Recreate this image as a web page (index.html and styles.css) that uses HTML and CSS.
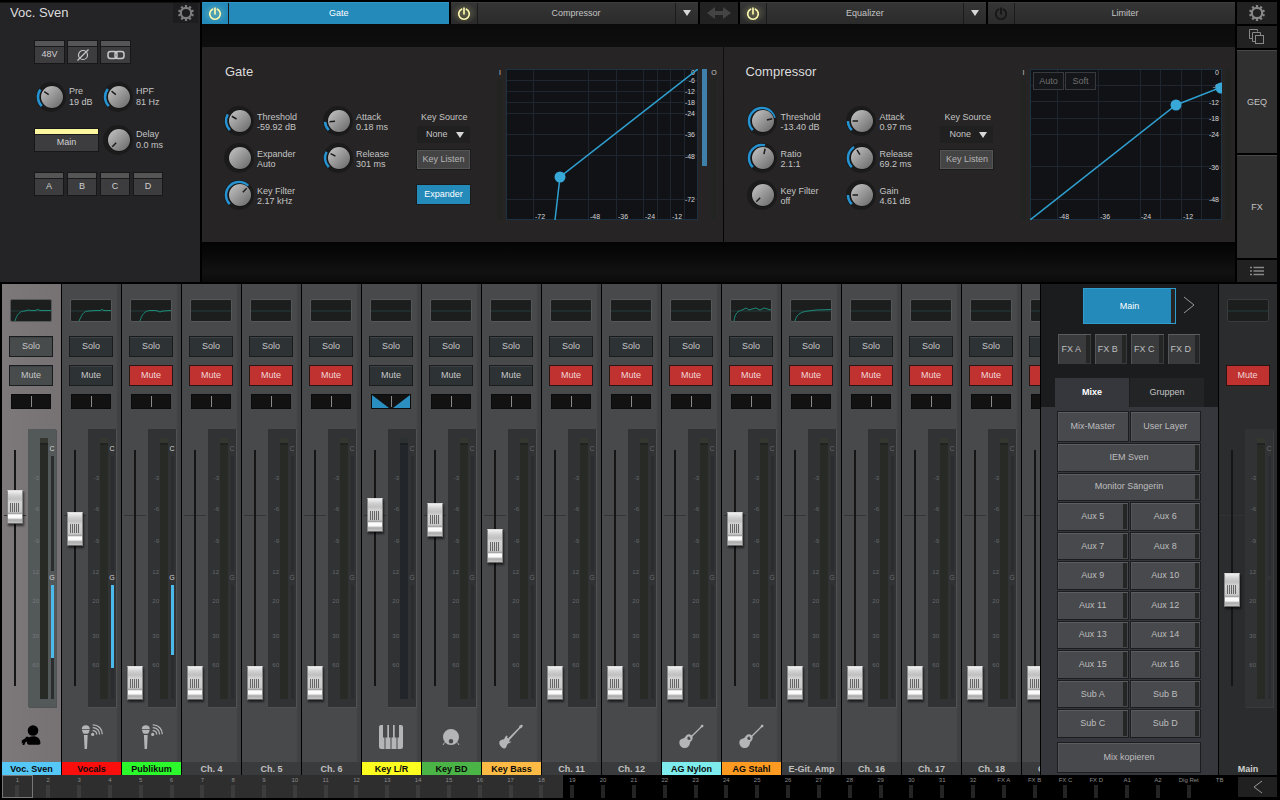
FILE: index.html
```html
<!DOCTYPE html>
<html lang="de">
<head>
<meta charset="UTF-8">
<meta name="viewport" content="width=device-width, initial-scale=1.0">
<title>Mixer</title>
<link rel="stylesheet" href="styles.css">
</head>
<body>
<svg class="defs" aria-hidden="true">
    <symbol id="i-gear" viewBox="0 0 18 18">
        <circle cx="9" cy="9" r="5.2" fill="none" stroke="currentColor" stroke-width="2.2"/>
        <circle cx="9" cy="9" r="7" fill="none" stroke="currentColor" stroke-width="2" pathLength="20" stroke-dasharray="1 1" transform="rotate(-99 9 9)"/>
    </symbol>
    <symbol id="i-power" viewBox="0 0 14 14">
        <path d="M4.6 2.2a5.3 5.3 0 1 0 4.8 0M7 1.2v5.6" fill="none" stroke="currentColor" stroke-width="1.7" stroke-linecap="round"/>
    </symbol>
    <symbol id="i-singer" viewBox="0 0 28 28">
        <circle cx="16" cy="9.500" r="5.3"/>
        <path d="M10.5 18c1.500-2 3.500-2.700 5.600-2.700 4.500 0 7.200 2.700 7.300 6.700 0 1-.7 1.700-1.700 1.700H12c-1.300 0-2-.8-2-2.200z"/>
        <path d="M4.800 19.500l3.500-2.200a2.200 2.200 0 1 1 2.500 2.700l-2.500 1.500-1 2.500H5.500l.8-2.500-1.500 1.500z"/>
    </symbol>
    <symbol id="i-mic" viewBox="0 0 28 28">
        <path d="M4.800 8c0-2.300 1.400-3.700 4-3.700s4 1.400 4 3.700zM4.800 8.800h8l-1 2.700a2 2 0 0 1-1.600 1.300H7.400a2 2 0 0 1-1.600-1.300zM6.900 14h3.800l-.7 14H7.600z"/>
        <circle cx="15.700" cy="13.400" r="1.600"/>
        <path d="M15.700 9.600c2.300 0 4 1.500 4 4M15.700 6.600c4 0 6.900 2.900 6.900 7M15.700 3.800c5.600 0 9.600 4 9.600 9.500" fill="none" stroke="currentColor" stroke-width="1.300"/>
    </symbol>
    <symbol id="i-keys" viewBox="0 0 28 28">
        <path d="M2 6a2 2 0 0 1 2-2h2v12.500h1.500V28H4.300A2.300 2.300 0 0 1 2 25.700zM8.500 28V16.500h1.800V4h1.700v12.500h1.500V28zM14.500 28V16.500H16V4h1.700v12.500h1.800V28zM20.500 28V16.500H22V4h2a2 2 0 0 1 2 2v19.700a2.300 2.300 0 0 1-2.300 2.300z"/>
    </symbol>
    <symbol id="i-drum" viewBox="0 0 28 28">
        <path fill-rule="evenodd" d="M14 8a8 8 0 1 1 0 16 8 8 0 0 1 0-16zM14 18a2.300 2.300 0 1 0 0 4.600 2.300 2.300 0 0 0 0-4.600z"/>
        <path d="M7.500 21.500l-1.500 2.500M20.500 21.500l1.500 2.500" stroke="currentColor" stroke-width="1"/>
    </symbol>
    <symbol id="i-bass" viewBox="0 0 28 28">
        <path d="M11 17.500L22 6.500l.3-1.500 2.200-1.500 1.500 1.300-1.500 2.200-1.500.5L12.500 19z"/>
        <path d="M10.500 15l-1-.500c-1.300.8-1.500 2-2 3-.6 1-1.500 1-2.700 1.300-1.800.6-2.800 2-2.500 3.700.3 1.800 1.500 3 3 4.200 1.400 1.200 3.200.8 4-.8.6-1.400.5-2.300 1.700-3.200 1.200-.8 2.900-.700 3.500-2.200l-1.500.2-1-.2.8-1.500-2.600-2.500z"/>
    </symbol>
    <symbol id="i-acoustic" viewBox="0 0 28 28">
        <path d="M12.500 16.500L23.500 5.700l.4-1.500 1.500-.7 1.200 1.200-.7 1.500-1.400.4L13.500 17.500z"/>
        <path fill-rule="evenodd" d="M9.500 14.300c1.500-1.600 3.700-1.300 5 0s1.700 3.400.4 4.900c-1.400 1.500-1.700 1.700-2 3.400-.6 3.300-3.300 5.200-6.400 4.300C4 26.200 2.300 23.900 2.300 21.400c0-2.200 1.500-3.500 3.700-3.900 1.800-.3 2.200-1.700 3.500-3.200zM12 15.600a1.700 1.700 0 1 0 0 3.400 1.700 1.700 0 0 0 0-3.400z"/>
    </symbol>
</svg>

<div class="top">
    <section class="input-panel">
        <header>
            <h1>Voc. Sven</h1>
            <button class="gear" aria-label="Channel settings"><svg><use href="#i-gear"/></svg></button>
        </header>
        <div class="input-body">
            <div class="row row-3">
                <button class="led-btn">48V</button>
                <button class="led-btn" aria-label="Phase"><svg viewBox="0 0 14 12"><circle cx="7" cy="6" r="4.500"/><path d="M1.500 11.500L12.500.5"/></svg></button>
                <button class="led-btn" aria-label="Link"><svg class="link" viewBox="0 0 18 12"><rect x="1" y="2.500" width="9" height="7" rx="2.500"/><rect x="8" y="2.500" width="9" height="7" rx="2.500"/></svg></button>
            </div>
            <div class="row row-knobs">
                <label class="knob" data-angle="-55"><span>Pre<br>19 dB</span></label>
                <label class="knob" data-angle="-52"><span>HPF<br>81 Hz</span></label>
            </div>
            <div class="row row-delay">
                <button class="led-btn on">Main</button>
                <label class="knob" data-angle="-135"><span>Delay<br>0.0 ms</span></label>
            </div>
            <div class="row row-4">
                <button class="led-btn">A</button>
                <button class="led-btn">B</button>
                <button class="led-btn">C</button>
                <button class="led-btn">D</button>
            </div>
        </div>
    </section>

    <main class="processing">
        <nav class="tabs">
            <div class="tab active">
                <button class="power on" aria-label="Gate on"><svg><use href="#i-power"/></svg></button>
                <button class="tab-name">Gate</button>
            </div>
            <div class="tab">
                <button class="power on" aria-label="Compressor on"><svg><use href="#i-power"/></svg></button>
                <button class="tab-name">Compressor</button>
                <button class="tab-menu" aria-label="Compressor models"><i class="caret"></i></button>
            </div>
            <button class="swap" aria-label="Swap"><svg viewBox="0 0 24 12"><path d="M0 6l8-6v4h8V0l8 6-8 6V8H8v4z"/></svg></button>
            <div class="tab">
                <button class="power on" aria-label="Equalizer on"><svg><use href="#i-power"/></svg></button>
                <button class="tab-name">Equalizer</button>
                <button class="tab-menu" aria-label="Equalizer models"><i class="caret"></i></button>
            </div>
            <div class="tab">
                <button class="power" aria-label="Limiter on"><svg><use href="#i-power"/></svg></button>
                <button class="tab-name">Limiter</button>
            </div>
        </nav>
        <div class="dynamics">
            <section class="dyn">
                <div class="controls">
                    <h2>Gate</h2>
                    <div class="knob-grid">
                        <label class="knob" data-angle="-60"><span>Threshold<br>-59.92 dB</span></label>
                        <label class="knob" data-angle="-94"><span>Attack<br>0.18 ms</span></label>
                        <label class="knob" data-angle=""><span>Expander<br>Auto</span></label>
                        <label class="knob" data-angle="-62"><span>Release<br>301 ms</span></label>
                        <label class="knob" data-angle="45"><span>Key Filter<br>2.17 kHz</span></label>
                    </div>
                </div>
                <div class="key">
                    <label for="gate-key">Key Source</label>
                    <div class="select"><select id="gate-key"><option>None</option></select><i class="caret"></i></div>
                    <button class="key-btn">Key Listen</button>
                    <button class="key-btn on">Expander</button>
                </div>
                <div class="scope">
                    <div class="io"><span>I</span><i></i></div>
                    <div class="graph" id="gate-graph"></div>
                    <div class="gr"><i></i></div>
                    <div class="io"><span>O</span><i></i></div>
                </div>
            </section>
            <section class="dyn comp-dyn">
                <div class="controls">
                    <h2>Compressor</h2>
                    <div class="knob-grid">
                        <label class="knob" data-angle="76"><span>Threshold<br>-13.40 dB</span></label>
                        <label class="knob" data-angle="-90"><span>Attack<br>0.97 ms</span></label>
                        <label class="knob" data-angle="13"><span>Ratio<br>2.1:1</span></label>
                        <label class="knob" data-angle="-32"><span>Release<br>69.2 ms</span></label>
                        <label class="knob" data-angle="-135"><span>Key Filter<br>off</span></label>
                        <label class="knob" data-angle="-90"><span>Gain<br>4.61 dB</span></label>
                    </div>
                </div>
                <div class="key">
                    <label for="comp-key">Key Source</label>
                    <div class="select"><select id="comp-key"><option>None</option></select><i class="caret"></i></div>
                    <button class="key-btn">Key Listen</button>
                </div>
                <div class="scope">
                    <div class="io"><span>I</span><i></i></div>
                    <div class="graph" id="comp-graph">
                        <div class="graph-btns"><button>Auto</button><button>Soft</button></div>
                    </div>
                    <div class="io"><i></i></div>
                </div>
            </section>
        </div>
    </main>

    <nav class="side">
        <button class="dark" aria-label="Settings"><svg width="18" height="18"><use href="#i-gear"/></svg></button>
        <button class="dark" aria-label="Copy"><svg class="line" width="16" height="16" viewBox="0 0 16 16"><path d="M3.500 9.500h-3v-9h8v2M6 12.500H3.500v-9h8V6"/><rect x="6.500" y="6.500" width="8" height="8"/></svg></button>
        <button class="tall">GEQ</button>
        <button class="tall">FX</button>
        <button class="dark" aria-label="List"><svg class="line" width="14" height="10" viewBox="0 0 14 10"><path stroke-width="1.500" d="M0 1.500h2M3.500 1.500H14M0 5h2M3.500 5H14M0 8.500h2M3.500 8.500H14"/></svg></button>
    </nav>
</div>

<div class="mixer">
    <div class="channels" id="channels"></div>
    <aside class="mixes">
        <div class="mix-head">
            <div class="mix-main">
                <button class="mix-btn meter on">Main</button>
                <button class="next" aria-label="Next"><svg viewBox="0 0 12 18"><path d="M1 1l10 8-10 8"/></svg></button>
            </div>
            <div class="fx-row">
                <button class="mix-btn meter">FX A</button>
                <button class="mix-btn meter">FX B</button>
                <button class="mix-btn meter">FX C</button>
                <button class="mix-btn meter">FX D</button>
            </div>
            <div class="mix-tabs">
                <button class="active">Mixe</button>
                <button>Gruppen</button>
            </div>
        </div>
        <div class="mix-list">
            <div class="mix-top">
                <button class="mix-btn">Mix-Master</button>
                <button class="mix-btn">User Layer</button>
            </div>
            <div class="mix-grid" id="mixes"></div>
            <button class="mix-btn copy">Mix kopieren</button>
        </div>
    </aside>
    <div class="main-out" id="main-out"></div>
</div>

<footer class="overview">
    <div class="map" id="map"></div>
    <button class="back" aria-label="Back"><svg viewBox="0 0 10 14"><path d="M9 1L1 7l8 6"/></svg></button>
</footer>
<script src="app.js"></script>
</body>
</html>
```
FILE: styles.css
```css
* {
    box-sizing: border-box;
}
body {
    margin: 0;
    min-height: 100vh;
    display: flex;
    flex-direction: column;
    padding: 2px 3px 2px 0;
    background: #000;
    color: #c4c4c4;
    font: 9px/11px "Liberation Sans", Arial, sans-serif;
}
button, select, input {
    font: inherit;
    color: inherit;
    margin: 0;
    padding: 0;
    border: 0;
    background: none;
}
h1, h2 {
    margin: 0;
    font-size: 13px;
    line-height: 20px;
    font-weight: normal;
    color: #dcdcdc;
}
.defs {
    position: absolute;
    width: 0;
    height: 0;
}
.caret {
    display: inline-block;
    border: 4px solid transparent;
    border-top: 6px solid #d8d8d8;
    border-bottom: 0;
}

/* top area */
.top {
    display: flex;
    gap: 2px;
    height: 280px;
}
.input-panel {
    width: 200px;
    background: #242427;
    border-top: 1px solid #111;
}
.input-panel header {
    display: flex;
    justify-content: space-between;
    padding: 0 2px 0 10px;
}
.gear {
    width: 25px;
    height: 20px;
    background: #1d1d20;
    color: #7d7d7d;
}
.gear svg {
    display: block;
    width: 18px;
    height: 18px;
    margin: 0 auto;
}
.input-body {
    padding: 18px 0 0 35px;
}
.row {
    display: flex;
    align-items: center;
}
.row-3 {
    gap: 4px;
}
.row-3 .led-btn {
    width: 29px;
}
.row-4 {
    gap: 5px;
    margin-top: 16px;
}
.row-4 .led-btn {
    width: 28px;
}
.row-knobs {
    margin: 17px 0 0 -1px;
}
.row-knobs .knob {
    width: 67px;
}
.row-delay {
    margin-top: 9px;
    gap: 3px;
}
.row-delay .led-btn {
    width: 63px;
}
.led-btn {
    height: 22px;
    background: #3d3d3f;
    border-top: 5px solid #555;
    outline: 1px solid #171719;
    box-shadow: inset 0 1px #1a1a1c;
    color: #d0d0d0;
    display: flex;
    align-items: center;
    justify-content: center;
}
.led-btn.on {
    border-top-color: #fdf8a0;
}
.led-btn svg {
    width: 14px;
    height: 12px;
    fill: none;
    stroke: #c8c8c8;
    stroke-width: 1.2;
}
.led-btn svg.link {
    width: 18px;
    stroke-width: 1.5;
}

/* knobs */
.knob {
    position: relative;
    display: flex;
    align-items: center;
    gap: 1px;
    white-space: nowrap;
}
.knob svg {
    flex: none;
    width: 34px;
    height: 34px;
}
.knob input {
    position: absolute;
    left: 0;
    top: 0;
    width: 34px;
    height: 34px;
    opacity: 0;
}

/* processing tabs */
.processing {
    flex: 1;
    min-width: 0;
    background: linear-gradient(#060606, #0f0f0f 47px, #040404 242px, #111 270px, #0b0b0b);
}
.tabs {
    display: grid;
    grid-template-columns: 1fr 1fr 38px 1fr 1fr;
    gap: 2px;
    height: 22px;
    background: #000;
}
.tab {
    display: flex;
    background: linear-gradient(#353535, #2b2b2b);
    border-top: 1px solid #3d3d3d;
}
.tab.active {
    background: #238aba;
    border-color: #2e97c6;
    color: #fff;
}
.power {
    width: 27px;
    color: #151515;
    border-right: 1px solid #1b1b1b;
}
.power svg {
    display: block;
    width: 14px;
    height: 14px;
    margin: 0 auto;
}
.power.on {
    color: #fbf7ae;
    background: radial-gradient(rgba(250, 245, 150, 0.25), transparent 70%);
}
.tab-name {
    flex: 1;
}
.tab-menu {
    width: 23px;
    border-left: 1px solid #1b1b1b;
}
.swap {
    background: #222;
}
.swap svg {
    display: block;
    width: 24px;
    height: 12px;
    margin: 0 auto;
    fill: #444;
}

/* gate and compressor */
.dynamics {
    display: grid;
    grid-template-columns: 522fr 511fr;
    gap: 1px;
    margin-top: 23px;
}
.dyn {
    display: flex;
    height: 195px;
    background: #262425;
    padding: 15px 0 0 20px;
    overflow: hidden;
}
.controls {
    width: 195px;
    flex: none;
}
.dyn h2 {
    padding-left: 3px;
}
.comp-dyn {
    padding-left: 21px;
}
.comp-dyn h2 {
    padding-left: 0;
}
.knob-grid {
    display: grid;
    grid-template-columns: 99px 96px;
    row-gap: 3px;
    margin-top: 22px;
}
.knob-grid .knob span {
    line-height: 10px;
    padding-top: 2px;
}
.key {
    width: 53px;
    flex: none;
    padding-top: 50px;
    white-space: nowrap;
}
.key label {
    display: block;
    padding-left: 4px;
}
.select {
    position: relative;
    margin-top: 3px;
}
.select select {
    width: 100%;
    height: 17px;
    padding-left: 9px;
    background: #212021;
    appearance: none;
}
.select .caret {
    position: absolute;
    right: 6px;
    top: 6px;
    pointer-events: none;
}
.key-btn {
    display: block;
    width: 53px;
    height: 19px;
    margin-top: 7px;
    background: #454445;
    border: 1px solid #555;
    outline: 1px solid #1c1b1c;
    color: #b4b4b4;
}
.key-btn.on {
    margin-top: 16px;
    background: #238aba;
    border-color: #238aba;
    color: #fff;
}
.scope {
    display: flex;
    margin-left: auto;
    padding: 7px 3px 0 0;
}
.comp-dyn .scope {
    padding-right: 0;
}
.io {
    width: 13px;
    height: 151px;
    display: flex;
    flex-direction: column;
    align-items: center;
    font-size: 7px;
}
.io span {
    height: 10px;
    line-height: 8px;
}
.io i {
    width: 5px;
    flex: 1;
    background: #212420;
}
.gr {
    width: 9px;
    padding-left: 4px;
}
.gr i {
    display: block;
    width: 5px;
    height: 97px;
    background: #3f80ab;
}
.graph {
    position: relative;
    width: 192px;
    height: 151px;
    background: #111216;
}
.graph svg {
    display: block;
    width: 192px;
    height: 151px;
    font-size: 7px;
    fill: #d2d2d2;
}
.graph-btns {
    position: absolute;
    left: 3px;
    top: 3px;
    display: flex;
    gap: 1px;
}
.graph-btns button {
    width: 31px;
    height: 18px;
    border: 1px solid #38393c;
    background: #15161a;
    color: #707070;
}

/* right hand nav */
.side {
    width: 40px;
    display: flex;
    flex-direction: column;
    gap: 2px;
}
.side button {
    display: flex;
    align-items: center;
    justify-content: center;
    height: 22px;
    background: #212122;
    color: #888;
}
.side .tall {
    flex: 1;
    background: #303031;
    border-top: 1px solid #484848;
    color: #c4c4c4;
}
.line {
    fill: none;
    stroke: currentColor;
}

/* mixer */
.mixer {
    flex: 1;
    display: flex;
    gap: 1px;
    padding: 0 0 0 2px;
    margin-top: 2px;
}
.channels {
    flex: 1;
    min-width: 0;
    display: flex;
    gap: 1px;
    overflow: hidden;
}
.strip {
    width: 59px;
    flex: none;
    display: flex;
    flex-direction: column;
    align-items: center;
    padding: 15px 1px 0 0;
    background: linear-gradient(90deg, #48494b, #48494b 54px, #404143 56px);
}
.strip.selected {
    background: linear-gradient(90deg, #7d7879, #767172);
}
.eq {
    width: 42px;
    height: 23px;
    border: 1px solid #565758;
    border-radius: 2px;
    background: #1c1d1d;
}
.eq path {
    fill: none;
    stroke: #22413f;
}
.eq .curve {
    stroke: #1d8a78;
}
.strip-btn {
    width: 44px;
    height: 21px;
    margin-top: 14px;
    background: #2d3235;
    border: 1px solid #191b1c;
    box-shadow: inset 0 1px #3c4245;
    color: #c6c6c6;
}
.strip-btn + .strip-btn {
    margin-top: 8px;
}
.strip-btn.muted {
    background: #bf3230;
    border-color: #2b1414;
    box-shadow: none;
    color: #f2d6d6;
}
.selected .strip-btn {
    background: #474b4c;
}
.pan {
    width: 40px;
    height: 15px;
    margin-top: 8px;
    background: #121212;
    border: 1px solid #0b0b0b;
}
.pan svg {
    display: block;
    width: 38px;
    height: 13px;
}
.level {
    flex: 1;
    align-self: stretch;
    display: grid;
    grid-template-columns: 26px 28px;
    min-height: 240px;
    margin-top: 20px;
}
.fader {
    contain: size;
    display: flex;
    justify-content: center;
    padding: 7px 0;
    background:
        linear-gradient(#151515, #151515) 12px 21px / 2px calc(100% - 42px) no-repeat,
        linear-gradient(#333435, #333435) 2px 31% / 22px 1px no-repeat;
}
.fader input {
    width: 16px;
    height: 100%;
    writing-mode: vertical-lr;
    direction: rtl;
    appearance: none;
}
.fader input::-webkit-slider-thumb {
    appearance: none;
    width: 16px;
    height: 34px;
    border: 1px solid #777;
    border-color: #ddd #888 #666;
    background:
        repeating-linear-gradient(90deg, #666 0 1px, transparent 1px 2px) 50% 50% / 10px 9px no-repeat,
        linear-gradient(#f0f0f0, #cdcdcd 15%, #c0c0c0 25%, #d4d4d4 35%, #c8c8c8 65%, #9a9a9a 72%, #fff 74%, #f8f8f8 84%, #aaa 90%, #c4c4c4);
    box-shadow: 1px 2px 2px rgba(0, 0, 0, 0.6);
}
.meter-box {
    display: grid;
    grid-template-columns: 12px 8px 8px;
    background: #303234;
    box-shadow: 1px 1px #505153;
    color: #66686a;
    font-size: 6px;
    line-height: 8px;
}
.selected .meter-box {
    background: #535859;
    color: #73797a;
}
.scale {
    display: grid;
    grid-template-rows: 53fr 31fr 32fr 31fr 29fr 35fr 29fr 38fr;
    text-align: right;
    padding-right: 1px;
}
.scale span {
    align-self: end;
}
.bar {
    margin: 9px 0 8px;
    background: linear-gradient(#34372f 5px, #222 5px, #222 7px, #272a25 7px);
}
.stereo .bar {
    background: linear-gradient(#2c3030 5px, #1c1e20 5px, #1c1e20 7px, #222529 7px);
}
.comp {
    display: flex;
    flex-direction: column;
    align-items: center;
    padding: 15px 0 8px;
    font-size: 7px;
    line-height: 10px;
    min-width: 0;
}
.live .comp {
    color: #d5d5d5;
}
.comp i {
    flex: 1;
    width: 3px;
    background: #2a2c2f;
    margin: 2px 0;
}
.comp i:last-child {
    margin-bottom: 0;
}
.comp b {
    display: block;
    background: #4bb9ec;
}
.icon {
    display: flex;
    align-items: center;
    justify-content: center;
    height: 55px;
}
.icon svg {
    width: 28px;
    height: 28px;
    fill: currentColor;
    color: #b4b5b6;
}
.selected .icon svg {
    color: #000;
}
.name {
    align-self: stretch;
    height: 13px;
    margin-right: -1px;
    line-height: 14px;
    text-align: center;
    font-weight: bold;
    white-space: nowrap;
    background: #3a3b3c;
    color: #c0c0c0;
}
.name.coloured {
    color: #0a0a0a;
}
.main-out {
    width: 58px;
    display: flex;
}
.main-out .strip {
    width: 58px;
    background: #2b2c2e;
}
.main-out .eq {
    border-color: #3a3b3d;
}
.main-out .meter-box {
    box-shadow: 1px 1px #3a3b3d;
}
.main-out .spacer {
    height: 21px;
    margin-top: 14px;
}
.main-out .spacer + .strip-btn {
    margin-top: 8px;
}
.main-out .pan {
    visibility: hidden;
}
.main-out .name {
    background: none;
    color: #d0d0d0;
}

/* mixes panel */
.mixes {
    width: 177px;
    display: flex;
    flex-direction: column;
    background: #36373c;
}
.mix-head {
    background: #1b1c1e;
    padding: 3px 14px 0;
}
.mix-main {
    display: flex;
    gap: 6px;
    padding-left: 27px;
}
.mix-main .mix-btn {
    width: 95px;
    height: 38px;
}
.next svg {
    width: 12px;
    height: 18px;
    fill: none;
    stroke: #999;
}
.mix-btn {
    position: relative;
    background: #48494d;
    border: 1px solid #1c1c1e;
    box-shadow: inset 0 1px #5c5d60, inset 1px 0 #535457;
    color: #bdbdbd;
}
.mix-btn.meter::after {
    content: "";
    position: absolute;
    right: 1px;
    top: 1px;
    bottom: 1px;
    width: 4px;
    background: #252525;
}
.mix-btn.on {
    background: #238aba;
    box-shadow: inset 0 0 0 1px #2e9ccc;
    color: #fff;
}
.fx-row {
    display: grid;
    grid-template-columns: repeat(4, 1fr);
    gap: 2px;
    margin: 8px 3px 0 2px;
}
.fx-row .mix-btn {
    height: 32px;
    padding-right: 6px;
    background: #3a3b3d;
}
.mix-tabs {
    display: grid;
    grid-template-columns: 1fr 1fr;
    gap: 1px;
    margin-top: 13px;
}
.mix-tabs button {
    height: 29px;
    background: #232426;
}
.mix-tabs .active {
    background: #36373c;
    color: #fff;
    font-weight: bold;
}
.mix-list {
    flex: 1;
    display: flex;
    flex-direction: column;
    padding: 4px 17px 2px 16px;
}
.mix-top {
    display: grid;
    grid-template-columns: 1fr 1fr;
    gap: 1px;
}
.mix-top .mix-btn, .copy {
    height: 31px;
}
.mix-grid {
    flex: 1;
    display: grid;
    grid-template-columns: 1fr 1fr;
    grid-auto-rows: 1fr;
    gap: 1px;
    margin: 1px 0 4px;
}
.wide {
    grid-column: span 2;
}

/* overview strip */
.overview {
    display: flex;
    gap: 3px;
    height: 23px;
    padding-left: 2px;
}
.map {
    flex: 1;
    display: grid;
    grid-auto-flow: column;
    grid-auto-columns: 1fr;
    background: linear-gradient(90deg, #2e2e2f 45.5%, #000 45.5%);
}
.map span {
    display: flex;
    flex-direction: column;
    align-items: center;
    font-size: 6px;
    line-height: 10px;
    white-space: nowrap;
    min-width: 0;
    color: #8c8c8c;
}
.map span::after {
    content: "";
    width: 4px;
    flex: 1;
    background: #3c3c3c;
}
.map .dim::after {
    background: #242424;
}
.map span:last-child::after {
    visibility: hidden;
}
.map span:first-child {
    outline: 1px solid #777;
    outline-offset: -1px;
}
.back {
    width: 39px;
    height: 20px;
    margin-top: 2px;
    background: #202021;
}
.back svg {
    display: block;
    width: 10px;
    height: 14px;
    margin: 0 auto;
    fill: none;
    stroke: #999;
}
```
FILE: app.js
```js
const curve1 = 'M4 21C6 14 9 11 14 11l3-1 3 .5 4 0 3-1 2 1h11';
const curve2 = 'M8 21C11 15 12 11 18 11l6-.5 5 0 2-1 2 1h7';
const curve3 = 'M9 21C11 14 14 11 19 10.500l6 0 4 1.500 3-1 8-.5';
const curve4 = 'M3 21C4 13 7 11 11 10l4-2 3 2 3-1 4-1 4 2 4-2 7 2';
const curve5 = 'M4 21C6 13 11 12 17 11l8-1 15-.5';

// level is the fader position in percent, gr the gain reduction in percent
const channels = [
    { name: 'Voc. Sven', color: '#55c8f8', level: 76.5, eq: curve1, icon: 'singer', gr: 64, selected: true },
    { name: 'Vocals', color: '#fb0f0c', level: 67, eq: curve2, icon: 'mic', gr: 73 },
    { name: 'Publikum', color: '#2cf92c', level: 0, eq: curve3, icon: 'mic', gr: 62, mute: true },
    { name: 'Ch. 4', level: 0, mute: true },
    { name: 'Ch. 5', level: 0, mute: true },
    { name: 'Ch. 6', level: 0, mute: true },
    { name: 'Key L/R', color: '#fdfd20', level: 73, icon: 'keys', stereo: true },
    { name: 'Key BD', color: '#4ab546', level: 71, icon: 'drum' },
    { name: 'Key Bass', color: '#fdbb45', level: 59.5, icon: 'bass' },
    { name: 'Ch. 11', level: 0, mute: true },
    { name: 'Ch. 12', level: 0, mute: true },
    { name: 'AG Nylon', color: '#7eecec', level: 0, icon: 'acoustic', mute: true },
    { name: 'AG Stahl', color: '#fc9a22', level: 67, eq: curve4, icon: 'acoustic', mute: true },
    { name: 'E-Git. Amp', level: 0, eq: curve5, mute: true },
    { name: 'Ch. 16', level: 0, mute: true },
    { name: 'Ch. 17', level: 0, mute: true },
    { name: 'Ch. 18', level: 0, mute: true },
    { name: 'Ch. 19', level: 0, mute: true }
];

const scale = ['-3', '-6', '-9', '12', '20', '30', '60'];

function strip(ch) {
    const cls = ['strip', ch.selected ? 'selected' : '', ch.gr ? 'live' : '', ch.stereo ? 'stereo' : ''].join(' ');
    const pan = ch.stereo ? '<path d="M0 0v13h17zM38 0v13H21z" fill="#2a8fc0"/>' : '';
    return `
        <div class="${cls}">
            <svg class="eq" viewBox="0 0 40 21"><path d="M0 11h40"/>${ch.eq ? `<path class="curve" d="${ch.eq}"/>` : ''}</svg>
            ${ch.main ? '<div class="spacer"></div>' : '<button class="strip-btn">Solo</button>'}
            <button class="strip-btn ${ch.mute ? 'muted' : ''}">Mute</button>
            <div class="pan"><svg>${pan}<path d="M19.500 1v11" stroke="#8a8a8a"/></svg></div>
            <div class="level">
                <div class="fader"><input type="range" min="0" max="100" step="0.5" value="${ch.level}" aria-label="${ch.name}"></div>
                <div class="meter-box">
                    <div class="scale">${scale.map(s => `<span>${s}</span>`).join('')}</div>
                    <div class="bar"></div>
                    <div class="comp">C<i></i>${ch.main ? '' : 'G'}<i>${ch.gr ? `<b style="height: ${ch.gr}%"></b>` : ''}</i></div>
                </div>
            </div>
            <div class="icon">${ch.icon ? `<svg><use href="#i-${ch.icon}"/></svg>` : ''}</div>
            <div class="name ${ch.color ? 'coloured' : ''}" ${ch.color ? `style="background: ${ch.color}"` : ''}>${ch.name}</div>
        </div>`;
}

document.getElementById('channels').innerHTML = channels.map(strip).join('');
document.getElementById('main-out').innerHTML = strip({ name: 'Main', level: 40.5, mute: true, main: true });

// mixes
const mixes = ['IEM Sven', 'Monitor Sängerin'];
for (let i = 5; i <= 16; i++) mixes.push('Aux ' + i);
mixes.push('Sub A', 'Sub B', 'Sub C', 'Sub D');
document.getElementById('mixes').innerHTML = mixes
    .map((m, i) => `<button class="mix-btn meter ${i < 2 ? 'wide' : ''}">${m}</button>`).join('');

// overview
const slots = [];
for (let i = 1; i <= 32; i++) slots.push(i);
slots.push('FX A', 'FX B', 'FX C', 'FX D', 'A1', 'A2', 'Dig Ret', 'TB');
document.getElementById('map').innerHTML = slots
    .map((s, i) => `<span class="${i > 17 ? 'dim' : ''}">${s}</span>`).join('');

// knobs, angle is measured clockwise from the top, -135 is the minimum
document.querySelectorAll('.knob').forEach((knob, n) => {
    const angle = knob.dataset.angle === '' ? null : Number(knob.dataset.angle);
    const sweep = angle === null ? 0 : angle + 135;
    const arc = sweep ? `<circle cx="17" cy="17" r="13" fill="none" stroke="#2593d2" stroke-width="2.500" pathLength="360" stroke-dasharray="${sweep} 360" transform="rotate(135 17 17)"/>` : '';
    const pointer = angle === null ? '' : `<path d="M18 13V7.500" stroke="#1c1c1c" stroke-width="1.500" transform="rotate(${angle} 18 17)"/>`;
    knob.insertAdjacentHTML('afterbegin', `
        <svg viewBox="0 0 34 34">
            <defs><linearGradient id="k${n}" x1="0" y1="0" x2="1" y2="1"><stop offset="0" stop-color="#c6c6c6"/><stop offset="1" stop-color="#666"/></linearGradient></defs>
            <circle cx="17" cy="17" r="15" fill="#1b1b1c"/>
            ${arc}
            <circle cx="18" cy="17" r="11.500" fill="#111"/>
            <circle cx="18" cy="17" r="11" fill="url(#k${n})"/>
            ${pointer}
        </svg>
        <input type="range" min="0" max="270" value="${sweep}">`);
});

function graph(id, g) {
    const v = g.xs.map(x => `M${x}.5 0V151`).join('');
    const h = g.ys.map(y => `M0 ${y}.5H192`).join('');
    const yText = g.yLabels.map(([t, y]) => `<text x="189" y="${y}" text-anchor="end">${t}</text>`).join('');
    const xText = g.xLabels.map(([t, x]) => `<text x="${x}" y="150">${t}</text>`).join('');
    const dots = g.dots.map(([x, y]) => `<circle cx="${x}" cy="${y}" r="5.500" fill="#38a8d8"/>`).join('');
    document.getElementById(id).insertAdjacentHTML('afterbegin', `
        <svg viewBox="0 0 192 151">
            <path d="${v}${h}" stroke="#20262f"/>
            <rect x="0.500" y="0.500" width="191" height="150" fill="none" stroke="#1c3142"/>
            ${yText}${xText}
            <path d="${g.line}" fill="none" stroke="#2f9fd0" stroke-width="1.500"/>
            ${dots}
        </svg>`);
}

graph('gate-graph', {
    xs: [27, 82, 110, 137, 151, 164, 178],
    ys: [11, 22, 33, 44, 65, 86, 130],
    yLabels: [['0', 6], ['-6', 14], ['-12', 25], ['-18', 36], ['-24', 47], ['-36', 68], ['-48', 90], ['-72', 133]],
    xLabels: [['-72', 29], ['-48', 84], ['-36', 112], ['-24', 139], ['-12', 166]],
    line: 'M49 151L54 108L192 0',
    dots: [[54, 108]]
});
graph('comp-graph', {
    xs: [27, 68, 110, 130, 151, 171],
    ys: [16, 32, 49, 65, 97, 130],
    yLabels: [['0', 6], ['-6', 20], ['-12', 36], ['-18', 52], ['-24', 68], ['-36', 101], ['-48', 133]],
    xLabels: [['-48', 29], ['-36', 70], ['-24', 111], ['-12', 153]],
    line: 'M0 151L146 36L192 18',
    dots: [[146, 36], [191, 19]]
});
```
